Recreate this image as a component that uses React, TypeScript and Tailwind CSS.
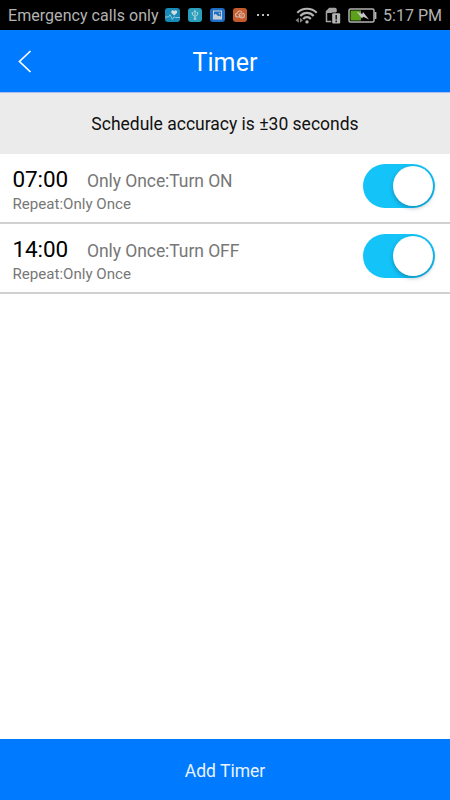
import React from "react";

const timers = [
  { time: "07:00", action: "Only Once:Turn ON", repeat: "Repeat:Only Once" },
  { time: "14:00", action: "Only Once:Turn OFF", repeat: "Repeat:Only Once" },
];

function HealthIcon() {
  return (
    <svg width="15" height="14" viewBox="0 0 15 14">
      <rect width="15" height="14" rx="3" fill="#168bb8" />
      <path d="M9.200 7.600 6.500 4.900C5.400 2.500 8 1.300 9.200 3c1.200-1.700 3.800-.5 2.700 1.900z" fill="#d5dcde" />
      <path d="M0 9h3.500l1.500-2.300 2.300 4.600L9 8.800l1.500.7H15" fill="none" stroke="#8fc5dc" strokeWidth="1" />
    </svg>
  );
}

function UsbIcon() {
  return (
    <svg width="14" height="14" viewBox="0 0 14 14">
      <rect width="14" height="14" rx="3" fill="#2a9fbd" />
      <path d="M7 3v7M4.500 5v2L7 8.500M9.500 5v2L7 8.500" fill="none" stroke="#a7cfd9" strokeWidth="1" />
      <path d="M7 1.500 8.500 4h-3z" fill="#a7cfd9" />
      <rect x="3.700" y="4.200" width="1.600" height="1.600" fill="#a7cfd9" />
      <circle cx="9.500" cy="5" r=".9" fill="#a7cfd9" />
      <circle cx="7" cy="10.800" r="1.300" fill="#a7cfd9" />
    </svg>
  );
}

function PictureIcon() {
  return (
    <svg width="15" height="14" viewBox="0 0 15 14">
      <rect width="15" height="14" rx="3" fill="#1c6fc4" />
      <rect x="3.500" y="3" width="8" height="8" fill="#1c6fc4" stroke="#c4cdd8" strokeWidth="1.100" />
      <path d="M3.500 10.500V7.500l2.200-1.700 2.600 2.500 1.200-.8 2.200 2v1.500H3.500z" fill="#c4cdd8" />
      <circle cx="9.500" cy="5.500" r=".8" fill="#c4cdd8" />
    </svg>
  );
}

function LinkIcon() {
  return (
    <svg width="14" height="14" viewBox="0 0 14 14">
      <rect width="14" height="14" rx="3" fill="#c55a2c" />
      <path d="M6.200 9H4.700a2 2 0 0 1-.3-4 2.500 2.500 0 0 1 4.600-.8" fill="none" stroke="#d8b9aa" strokeWidth="1.100" />
      <circle cx="8.900" cy="7.500" r="2.500" fill="none" stroke="#d8b9aa" strokeWidth="1.100" />
      <path d="M5.400 6.200 8.600 8.800M8.900 6v3" stroke="#d8b9aa" strokeWidth=".9" />
    </svg>
  );
}

function WifiIcon() {
  return (
    <svg width="23" height="17" viewBox="0 0 23 17">
      <g fill="none" stroke="#b4b4b4" strokeWidth="2.200">
        <path d="M2.300 5.700C7.500.4 16.500.4 21.700 5.700" />
        <path d="M5.300 8.900c3.700-4 9.700-4 13.400 0" />
        <path d="M8.200 12c2.100-2.500 5.500-2.500 7.600 0" />
      </g>
      <circle cx="12" cy="14.900" r="1.700" fill="#b4b4b4" />
      <path d="M3.800 10.800v5L.5 13.300zM5 10.800v5l3-2.500z" fill="#858585" />
    </svg>
  );
}

function SimAlertIcon() {
  return (
    <svg width="16" height="17" viewBox="0 0 16 17">
      <path d="M6.500 14.500H1.500V4.500L4.500 1.500h5.500q1 0 1 1V5" fill="none" stroke="#a4a4a4" strokeWidth="1.500" />
      <path d="M1.500 6V4.500l3-3H11V6z" fill="#a4a4a4" />
      <rect x="6.500" y="5.500" width="9" height="11.500" rx="1" fill="#000" />
      <rect x="7.200" y="6.200" width="8" height="10.300" rx="1" fill="#b5b5b5" />
      <path d="M11.200 8v4.500M11.200 13.600v1.600" stroke="#161616" strokeWidth="1.500" />
    </svg>
  );
}

function BatteryIcon() {
  return (
    <svg width="29" height="15" viewBox="0 0 29 15">
      <rect x="1" y="1" width="25" height="13" rx="1.500" fill="none" stroke="#b3b3b3" strokeWidth="1.500" />
      <path d="M27.500 4v7" stroke="#b3b3b3" strokeWidth="1.800" />
      <rect x="2.500" y="2.500" width="10.500" height="10" fill="#5da01c" />
      <path d="m8.500 3.500 5.800 2.400.7-1.900 6 7.500-5.800-2.700-1.200 1.700z" fill="#c7c7c7" />
    </svg>
  );
}

function StatusBar() {
  return (
    <div className="flex h-[30px] shrink-0 items-center bg-black pl-2 pr-2 text-[16px] text-[#b3b3b3]">
      <span className="w-[157px] whitespace-nowrap pt-px tracking-[0.05px]">Emergency calls only</span>
      <div className="flex items-center gap-2">
        <HealthIcon />
        <UsbIcon />
        <PictureIcon />
        <LinkIcon />
      </div>
      <div className="ml-[10px] flex gap-[3px]">
        <i className="size-[2px] bg-[#bdbdbd]" />
        <i className="size-[2px] bg-[#bdbdbd]" />
        <i className="size-[2px] bg-[#bdbdbd]" />
      </div>
      <div className="ml-auto flex items-center">
        <WifiIcon />
        <span className="ml-[7px]"><SimAlertIcon /></span>
        <span className="ml-[7px] pt-px"><BatteryIcon /></span>
        <span className="ml-[6px] whitespace-nowrap pt-[2px]">5:17 PM</span>
      </div>
    </div>
  );
}

function Toggle() {
  return (
    <button
      role="switch"
      aria-checked="true"
      className="flex h-11 w-[72px] items-center justify-end rounded-full bg-[#14c3f8] pr-[2px]"
    >
      <span className="size-10 rounded-full bg-white shadow-[0_2px_4px_rgba(0,50,80,0.35)]" />
    </button>
  );
}

export default function App() {
  return (
    <div className="flex h-[800px] w-[450px] flex-col overflow-hidden bg-white font-['Roboto',sans-serif]">
      <StatusBar />
      <header className="grid h-[63px] shrink-0 grid-cols-[1fr_auto_1fr] items-center border-b border-[#acbff0] bg-[#007aff] text-white">
        <button aria-label="Back" className="pl-[18px]">
          <svg width="14" height="23" viewBox="0 0 14 23">
            <path d="M12.500 1 1.500 11.500l11 10.500" fill="none" stroke="white" strokeWidth="1.700" />
          </svg>
        </button>
        <h1 className="pt-[3px] text-[25px] tracking-[0.1px]">Timer</h1>
      </header>
      <div className="flex h-[61px] shrink-0 items-center justify-center bg-[#ebebeb] pt-[2px] text-[17.500px] text-[#111]">
        Schedule accuracy is ±30 seconds
      </div>
      <main className="flex-1">
        {timers.map((timer) => (
          <section key={timer.time} className="flex h-[70px] justify-between border-b-2 border-[#d0d0d0] pl-[12.500px] pr-[15px] pt-[10px]">
            <div>
              <div className="flex h-[30px] items-baseline">
                <span className="w-[74.500px] text-[22.500px] leading-[30px] tracking-[-0.1px] text-black">{timer.time}</span>
                <span className="text-[17.500px] leading-[30px] tracking-[-0.07px] text-[#777]">{timer.action}</span>
              </div>
              <div className="text-[15.100px] leading-[20px] text-[#777]">{timer.repeat}</div>
            </div>
            <Toggle />
          </section>
        ))}
      </main>
      <button className="h-[61px] shrink-0 bg-[#007aff] pt-[3px] text-[17.500px] text-[#eaf3ff]">Add Timer</button>
    </div>
  );
}
